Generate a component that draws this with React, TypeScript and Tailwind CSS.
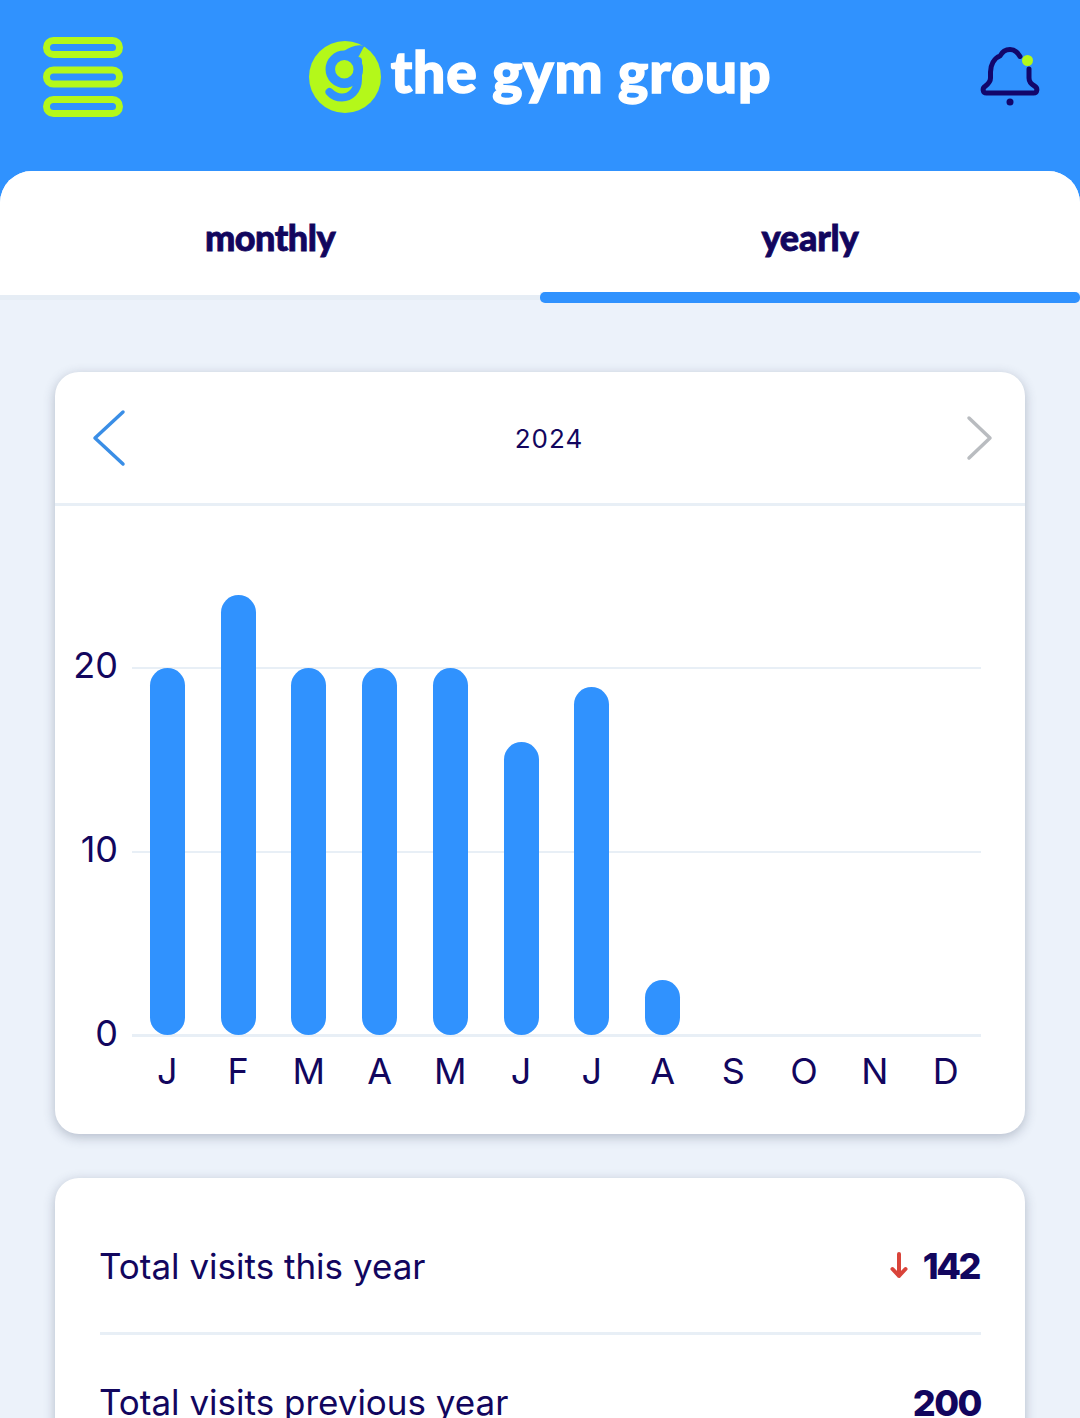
const months = ["J", "F", "M", "A", "M", "J", "J", "A", "S", "O", "N", "D"];
const visits = [20, 24, 20, 20, 20, 16, 19, 3, 0, 0, 0, 0];

function MenuIcon() {
  return (
    <svg width="80" height="80" viewBox="0 0 80 80" fill="none" stroke="#b4f81a" strokeWidth="7">
      <rect x="3.5" y="3.5" width="73" height="14" rx="7" />
      <rect x="3.5" y="33" width="73" height="14" rx="7" />
      <rect x="3.5" y="62.5" width="73" height="14" rx="7" />
    </svg>
  );
}

function LogoMark() {
  return (
    <svg width="72" height="72" viewBox="0 0 72 72" fill="none">
      <circle cx="36" cy="36" r="36" fill="#b4f81a" />
      <path d="M55.5 5 C48 3 41 6 35 10 L46 20 C50 17 52 10 55.5 5Z" fill="#3092fe" />
      <circle cx="35.3" cy="28.3" r="14" stroke="#3092fe" strokeWidth="9.5" />
      <path d="M49 20 V38 C49 50 41 56.5 33 56.5 C28 56.5 24 55 20.5 51" stroke="#3092fe" strokeWidth="8" strokeLinecap="round" />
    </svg>
  );
}

function BellIcon() {
  return (
    <svg width="60" height="60" viewBox="0 0 60 60" fill="none" stroke="#12066b" strokeWidth="5" strokeLinecap="round" strokeLinejoin="round">
      <path d="M40 9.5 C37 4 33 2.5 30 2.5 C26 2.5 22 5 20 9 C14 11 10.5 18 10.5 25 V31 C10.5 35 8 37 5.5 39 C2 41 2.5 46 6.5 46 H53.5 C57.5 46 58 41 54.5 39 C51 37 49 35 49 31 V22" />
      <circle cx="30" cy="55" r="3.5" fill="#12066b" stroke="none" />
      <circle cx="47.5" cy="13.5" r="5.5" fill="#b4f81a" stroke="none" />
    </svg>
  );
}

function Chevron({ direction, color }: { direction: "left" | "right"; color: string }) {
  return (
    <svg width="34" height="60" viewBox="0 0 34 60" fill="none" stroke={color} strokeWidth="3.5" strokeLinecap="round" strokeLinejoin="round">
      <path d={direction === "left" ? "M31 3 L3 29 L31 55" : "M5 9 L26 29 L5 49"} />
    </svg>
  );
}

function ArrowDown() {
  return (
    <svg width="18" height="28" viewBox="0 0 18 28" fill="none" stroke="#d9443a" strokeWidth="4" strokeLinecap="round" strokeLinejoin="round">
      <path d="M9 2 V24 M2.5 17 L9 24 L15.5 17" />
    </svg>
  );
}

function Chart() {
  return (
    <div className="flex pl-[18px] pr-[44px] pt-[161px]">
      <div className="relative h-[370px] w-[59px] text-[36px] leading-none text-[#12065e]">
        <span className="absolute right-[14px] top-[-20px]">20</span>
        <span className="absolute right-[14px] top-[164px]">10</span>
        <span className="absolute right-[14px] top-[348px]">0</span>
      </div>
      <div className="flex-1">
        <div className="relative h-[370px] border-b-[3px] border-[#e8eff6]">
          <div className="absolute inset-x-0 top-0 h-[2px] bg-[#e8eff6]" />
          <div className="absolute inset-x-0 top-[184px] h-[2px] bg-[#e8eff6]" />
          <div className="relative grid h-[368px] grid-cols-12 grid-rows-[368px] items-end">
            {visits.map((v, i) => (
              <div key={i} className="flex justify-center">
                {v > 0 ? (
                  <div className="w-[35px] rounded-[18px] bg-[#3092fe]" style={{ height: v * 18.33 }} />
                ) : null}
              </div>
            ))}
          </div>
        </div>
        <div className="grid grid-cols-12 pt-[16px] text-center text-[36px] leading-none text-[#12065e]">
          {months.map((m, i) => (
            <span key={i}>{m}</span>
          ))}
        </div>
      </div>
    </div>
  );
}

export default function App() {
  return (
    <div className="h-[1418px] w-[1080px] overflow-hidden bg-[#3092fe] font-['Inter',sans-serif]">
      <header className="flex h-[171px] items-start justify-between pl-[43px] pr-[40px]">
        <div className="pt-[37px]">
          <MenuIcon />
        </div>
        <div className="mr-[23px] flex items-center gap-[10px] pt-[41px]">
          <LogoMark />
          <span className="font-['Lato',sans-serif] text-[57px] leading-none font-black tracking-[0.9px] text-white [-webkit-text-stroke:1.5px_white] -translate-y-[6px]">
            the gym group
          </span>
        </div>
        <div className="pt-[47px]">
          <BellIcon />
        </div>
      </header>

      <main className="h-[1247px] rounded-t-[32px] bg-[#ecf2fa]">
        <div className="flex h-[132px] overflow-hidden rounded-t-[32px]">
          <div className="flex flex-1 flex-col">
            <div className="flex h-[124px] items-center justify-center bg-white pt-[8px] font-['Lato',sans-serif] text-[36px] font-black tracking-[-0.5px] text-[#12065e] [-webkit-text-stroke:0.8px_#12065e]">
              monthly
            </div>
            <div className="h-[5px] bg-[#e6edf5]" />
          </div>
          <div className="flex flex-1 flex-col">
            <div className="flex h-[121px] items-center justify-center bg-white pt-[11px] font-['Lato',sans-serif] text-[36px] font-black tracking-[-0.2px] text-[#12065e] [-webkit-text-stroke:0.8px_#12065e]">
              yearly
            </div>
            <div className="h-[11px] rounded-[5px] bg-[#3092fe]" />
          </div>
        </div>

        <section className="mx-[55px] mt-[69px] h-[762px] rounded-[24px] bg-white shadow-[0_3px_12px_rgba(60,70,100,0.32)]">
          <div className="flex h-[134px] items-center justify-between border-b-[3px] border-[#e8eff6] pl-[37px] pr-[27px] pt-[2px]">
            <Chevron direction="left" color="#3a8ee6" />
            <span className="pl-[8px] text-[26px] tracking-[1px] text-[#12065e]">2024</span>
            <Chevron direction="right" color="#b9bcc0" />
          </div>
          <Chart />
        </section>

        <section className="mx-[55px] mt-[44px] rounded-[24px] bg-white pl-[45px] pr-[44px] shadow-[0_3px_12px_rgba(60,70,100,0.32)]">
          <div className="flex h-[157px] items-center justify-between border-b-[3px] border-[#e8eff6] pt-[22px] text-[35px] text-[#12065e]">
            <span className="-ml-[1px]">Total visits this year</span>
            <span className="mr-[2px] flex items-center gap-[15px] text-[36px] font-extrabold tracking-[-2.5px]">
              <ArrowDown />
              142
            </span>
          </div>
          <div className="flex h-[135px] items-center justify-between text-[35px] text-[#12065e]">
            <span className="-ml-[1px]">Total visits previous year</span>
            <span className="text-[36px] font-extrabold tracking-[-1.5px]">200</span>
          </div>
        </section>
      </main>
    </div>
  );
}
